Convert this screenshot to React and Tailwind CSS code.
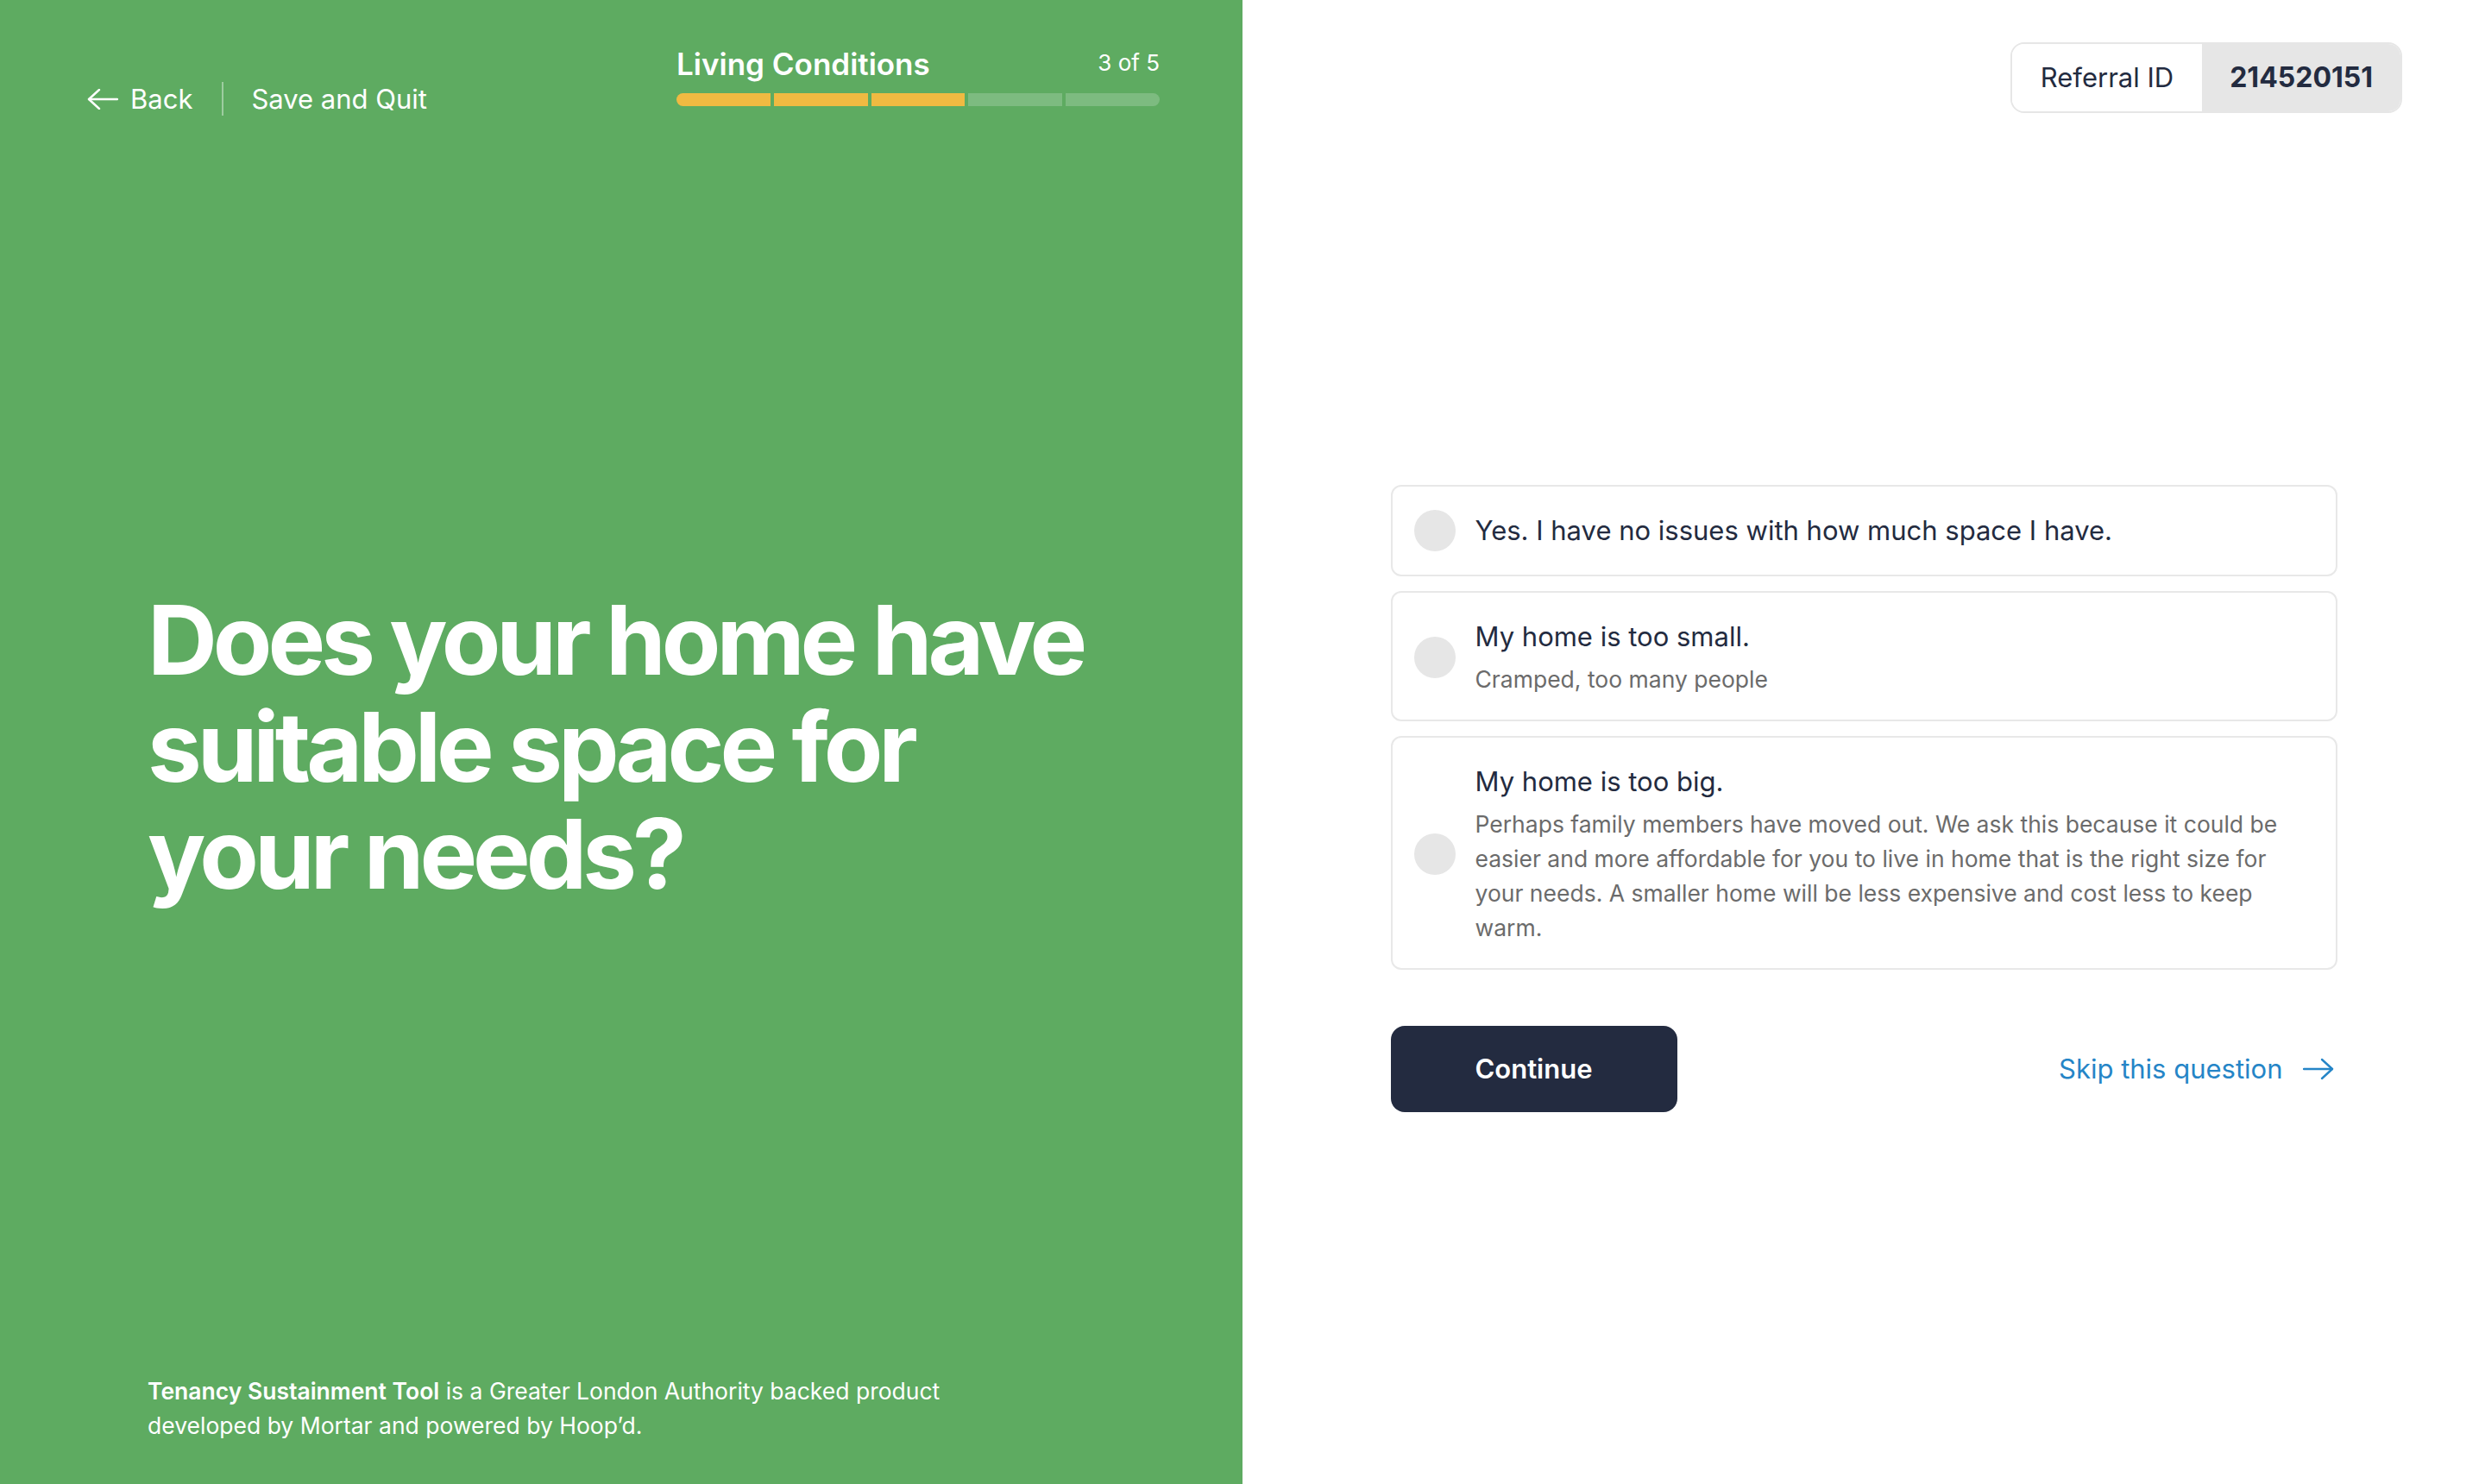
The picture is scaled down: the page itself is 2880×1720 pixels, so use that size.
import React from 'react';

const options = [
  { title: 'Yes. I have no issues with how much space I have.' },
  { title: 'My home is too small.', desc: 'Cramped, too many people' },
  {
    title: 'My home is too big.',
    desc: 'Perhaps family members have moved out. We ask this because it could be easier and more affordable for you to live in home that is the right size for your needs. A smaller home will be less expensive and cost less to keep warm.'
  }
];

function LongArrow({ dir = 'left', className = '' }) {
  // wide thin arrow, 36x24
  return (
    <svg viewBox="0 0 36 24" className={className} fill="none" stroke="currentColor" strokeWidth="2.4" strokeLinecap="round" strokeLinejoin="round">
      {dir === 'left' ? (
        <>
          <path d="M2 12h33" />
          <path d="M14 1 2 12l12 11" />
        </>
      ) : (
        <>
          <path d="M1 12h33" />
          <path d="M22 1l12 11-12 11" />
        </>
      )}
    </svg>
  );
}

function Option({ title, desc }) {
  return (
    <div className={`flex items-center gap-[23px] rounded-xl border-2 border-[#e8e8e8] pl-[25px] pr-14 ${desc ? 'pb-[27px] pt-[30px]' : 'py-[27px]'}`}>
      <div className="size-12 shrink-0 rounded-full bg-[#e6e6e6]" />
      <div>
        <p className="text-[31px] leading-[42px] text-[#232b40]">{title}</p>
        {desc && <p className="mt-2 text-[26.5px] leading-[40px] text-[#6b6b6b]">{desc}</p>}
      </div>
    </div>
  );
}

export default function App() {
  const steps = 5;
  const done = 3;

  return (
    <div className="flex h-[1720px] w-[2880px] font-['Inter',sans-serif]">
      {/* left: question */}
      <div className="flex h-full w-[1440px] flex-col bg-[#5eab61] text-white">
        <header className="flex items-start pl-[101px] pr-[96px] pt-[53px]">
          <nav className="mt-[42px] flex items-center text-[31px] leading-[39px]">
            <button className="flex items-center gap-[14px]">
              <LongArrow dir="left" className="h-6 w-9" />
              Back
            </button>
            <span className="ml-[34px] mr-[32px] h-[39px] w-[2px] bg-white/40" />
            <button>Save and Quit</button>
          </nav>
          <div className="ml-auto w-[560px]">
            <div className="flex items-end justify-between">
              <p className="text-[35px] font-semibold leading-[42px]">Living Conditions</p>
              <p className="mb-[6px] text-[26px] leading-[32px]">{done} of {steps}</p>
            </div>
            <div className="mt-[13px] flex h-[15px] gap-[4px]">
              {Array.from({ length: steps }).map((_, i) => (
                <div
                  key={i}
                  className={`flex-1 ${i < done ? 'bg-[#f0ba42]' : 'bg-[#7dbb80]'} ${i === 0 ? 'rounded-l-full' : ''} ${i === steps - 1 ? 'rounded-r-full' : ''}`}
                />
              ))}
            </div>
          </div>
        </header>

        <main className="flex flex-1 items-center pl-[171px] pt-[4px]">
          <h1 className="text-[112px] font-bold leading-[124px] tracking-[-0.045em]">
            Does your home have<br />suitable space for<br />your needs?
          </h1>
        </main>

        <footer className="pb-12 pl-[171px] text-[26.5px] leading-[40px]">
          <p className="max-w-[960px]">
            <span className="font-semibold">Tenancy Sustainment Tool</span> is a Greater London Authority backed product developed by Mortar and powered by Hoop’d.
          </p>
        </footer>
      </div>

      {/* right: answers */}
      <div className="flex h-full w-[1440px] flex-col bg-white">
        <div className="flex justify-end pr-[96px] pt-[49px]">
          <div className="flex h-[82px] overflow-hidden rounded-2xl border-2 border-[#e6e6e6] text-[31px] text-[#232b40]">
            <span className="flex items-center bg-white px-[33px]">Referral ID</span>
            <span className="flex items-center bg-[#e6e6e6] px-[32px] text-[32px] font-bold">214520151</span>
          </div>
        </div>

        <div className="mx-auto mt-[431px] w-[1097px]">
          <div className="flex flex-col gap-[17px]">
            {options.map((o) => (
              <Option key={o.title} {...o} />
            ))}
          </div>

          <div className="mt-[65px] flex items-center justify-between">
            <button className="h-[100px] w-[332px] rounded-2xl bg-[#232b40] text-[31px] font-semibold text-white">
              Continue
            </button>
            <button className="mr-1 flex items-center gap-[23px] text-[31px] text-[#2585c7]">
              Skip this question
              <LongArrow dir="right" className="h-[26px] w-9" />
            </button>
          </div>
        </div>
      </div>
    </div>
  );
}
